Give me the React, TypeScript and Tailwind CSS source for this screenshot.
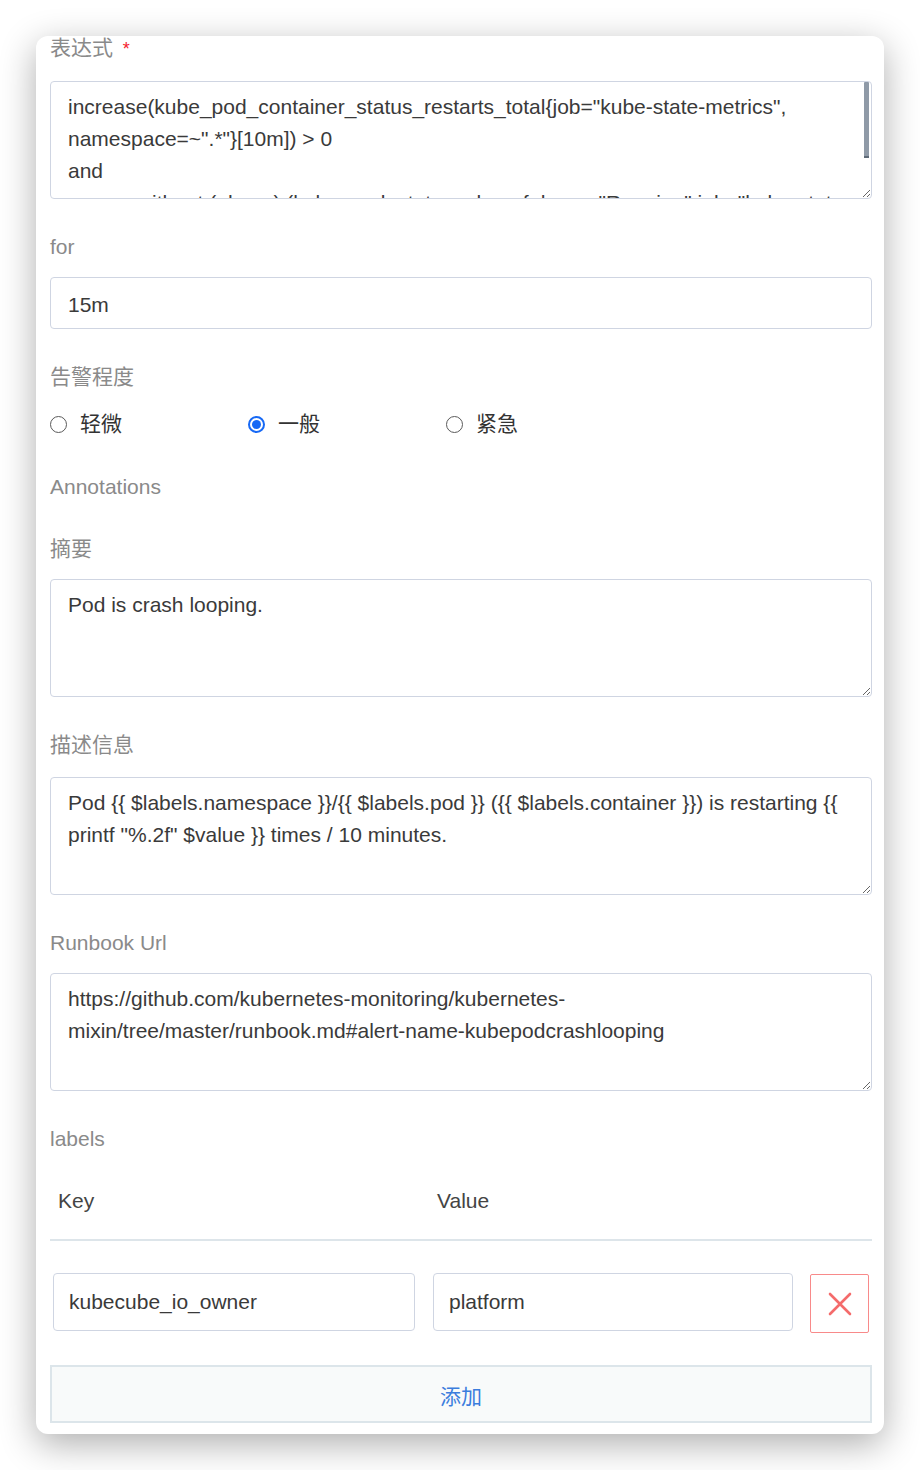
import React from "react";

const FONT = '"Liberation Sans", "Noto Sans CJK SC", Arial, sans-serif';

function Label({ children, className = "" }: { children: React.ReactNode; className?: string }) {
  return <div className={`h-8 leading-8 text-[21px] text-[#8a8a8a] ${className}`}>{children}</div>;
}

function Area({ value, className = "" }: { value: string; className?: string }) {
  return (
    <textarea
      readOnly
      value={value}
      className={`block w-full h-[118px] border border-[#cfd5e2] rounded-[4px] bg-white pl-[17px] pr-[17px] pt-[9px] pb-[9px] text-[21px] leading-8 text-[#3a3a3a] overflow-hidden outline-none ${className}`}
      style={{ fontFamily: FONT }}
    />
  );
}

function Radio({ checked, label }: { checked?: boolean; label: string }) {
  return (
    <div className="w-[198px] flex items-center h-8">
      {checked ? (
        <div className="w-[17px] h-[17px] rounded-full border-2 border-[#1769f5] flex items-center justify-center">
          <div className="w-[9px] h-[9px] rounded-full bg-[#1769f5]" />
        </div>
      ) : (
        <div className="w-[17px] h-[17px] rounded-full border-[1.5px] border-[#5a5a5a] bg-white" />
      )}
      <span className="ml-[13px] text-[21px] text-[#333]">{label}</span>
    </div>
  );
}

export default function App() {
  const expr =
    'increase(kube_pod_container_status_restarts_total{job="kube-state-metrics", namespace=~".*"}[10m]) > 0\nand\n    sum without (phase) (kube_pod_status_phase{phase="Running",job="kube-state-metrics"} == 1)';
  return (
    <div className="w-[920px] h-[1470px] bg-white pt-[36px] pl-[36px]" style={{ fontFamily: FONT }}>
      <div className="w-[848px] h-[1398px] bg-white rounded-[12px] overflow-hidden shadow-[0_10px_36px_rgba(0,0,0,0.32)] pl-[14px] pr-[12px] pb-[11px]">
        <Label className="-mt-[4px]">
          表达式 <span className="text-[#f5222d] text-[18px] ml-[4px]">*</span>
        </Label>
        <div className="relative mt-[17px]">
          <Area value={expr} />
          <div className="absolute right-[3px] top-[1px] w-[5px] h-[76px] bg-[#8f9aa7] border-b-2 border-[#5f6b78] rounded-t-[1px]" />
        </div>

        <Label className="mt-[32px]">for</Label>
        <input
          readOnly
          value="15m"
          className="block mt-[14px] w-full h-[52px] border border-[#cfd5e2] rounded-[4px] px-[17px] pt-[3px] text-[21px] text-[#3a3a3a] outline-none"
          style={{ fontFamily: FONT }}
        />

        <Label className="mt-[32px]">告警程度</Label>
        <div className="mt-[15px] flex">
          <Radio label="轻微" />
          <Radio label="一般" checked />
          <Radio label="紧急" />
        </div>

        <Label className="mt-[31px]">Annotations</Label>

        <Label className="mt-[30px]">摘要</Label>
        <Area className="mt-[14px]" value="Pod is crash looping." />

        <Label className="mt-[32px]">描述信息</Label>
        <Area
          className="mt-[16px]"
          value={'Pod {{ $labels.namespace }}/{{ $labels.pod }} ({{ $labels.container }}) is restarting {{ printf "%.2f" $value }} times / 10 minutes.'}
        />

        <Label className="mt-[32px]">Runbook Url</Label>
        <Area
          className="mt-[14px]"
          value="https://github.com/kubernetes-monitoring/kubernetes-mixin/tree/master/runbook.md#alert-name-kubepodcrashlooping"
        />

        <Label className="mt-[32px]">labels</Label>

        <div className="mt-[30px] flex pb-[22px] border-b-2 border-[#dde5ea] text-[21px] leading-8 text-[#444]">
          <div className="w-[387px] pl-[8px]">Key</div>
          <div>Value</div>
        </div>

        <div className="mt-[32px] flex items-start pl-[3px]">
          <input
            readOnly
            value="kubecube_io_owner"
            className="block w-[362px] h-[58px] border border-[#cfd5e2] rounded-[4px] px-[15px] text-[21px] text-[#3a3a3a] outline-none"
            style={{ fontFamily: FONT }}
          />
          <input
            readOnly
            value="platform"
            className="block ml-[18px] w-[360px] h-[58px] border border-[#cfd5e2] rounded-[4px] px-[15px] text-[21px] text-[#3a3a3a] outline-none"
            style={{ fontFamily: FONT }}
          />
          <div className="ml-[17px] mt-[1px] w-[59px] h-[59px] border border-[#f88a8a] rounded-[2px] flex items-center justify-center">
            <svg width="24" height="24" viewBox="0 0 24 24">
              <path d="M2 2 L22 22 M22 2 L2 22" stroke="#f46b6b" strokeWidth="2.6" strokeLinecap="round" fill="none" />
            </svg>
          </div>
        </div>

        <div className="mt-[32px] h-[58px] border-2 border-[#dce5ea] bg-[#f8fafa] flex items-center justify-center pt-[5px] text-[21px] text-[#3b7ddd]">
          添加
        </div>
      </div>
    </div>
  );
}
